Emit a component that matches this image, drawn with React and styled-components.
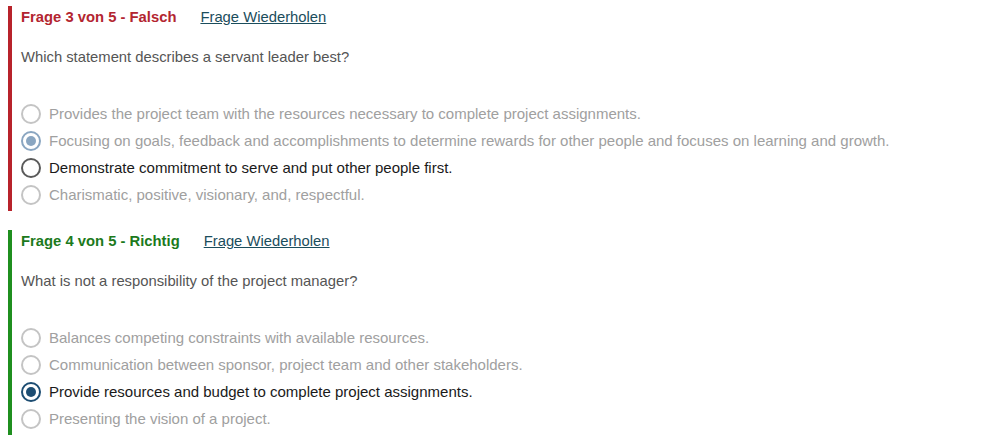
import styled, { createGlobalStyle } from 'styled-components';

const GlobalStyle = createGlobalStyle`
  body {
    margin: 6px 8px 8px;
    background: #fff;
    font-family: "Liberation Sans", Arial, sans-serif;
  }
`;

const Block = styled.section`
  border-left: 4px solid ${p => p.$correct ? '#1f8f1f' : '#b8232b'};
  padding: 0 0 3px 9px;
  margin: 0 0 19px;
`;

const Header = styled.div`
  display: flex;
  align-items: center;
  height: 22px;
  font-size: 14.8px;
`;

const Status = styled.span`
  font-weight: bold;
  color: ${p => p.$correct ? '#1c7a1c' : '#b32530'};
  margin-right: 24px;
`;

const Retry = styled.a`
  color: #1b4d5c;
  text-decoration: underline;
  cursor: pointer;
`;

const Question = styled.p`
  margin: 19px 0 0;
  line-height: 20px;
  font-size: 14.8px;
  color: #555;
`;

const Options = styled.div`
  margin-top: 33px;
  display: flex;
  flex-direction: column;
`;

const Option = styled.label`
  display: flex;
  align-items: center;
  height: 27px;
  font-size: 15px;
  color: ${p => p.$active ? '#1a1a1a' : '#a0a0a0'};
`;

const Radio = styled.span`
  box-sizing: border-box;
  width: 20px;
  height: 20px;
  border-radius: 50%;
  border: 2px solid ${p => p.$color};
  margin-right: 8px;
  display: flex;
  align-items: center;
  justify-content: center;
  flex: none;
  &::after {
    content: '';
    display: ${p => p.$checked ? 'block' : 'none'};
    width: 10px;
    height: 10px;
    border-radius: 50%;
    background: ${p => p.$color};
  }
`;

const quiz = [
  {
    title: 'Frage 3 von 5 - Falsch',
    correct: false,
    question: 'Which statement describes a servant leader best?',
    options: [
      { text: 'Provides the project team with the resources necessary to complete project assignments.' },
      { text: 'Focusing on goals, feedback and accomplishments to determine rewards for other people and focuses on learning and growth.', checked: true, color: '#8aa6c1' },
      { text: 'Demonstrate commitment to serve and put other people first.', active: true, color: '#5a5a5a' },
      { text: 'Charismatic, positive, visionary, and, respectful.' },
    ],
  },
  {
    title: 'Frage 4 von 5 - Richtig',
    correct: true,
    question: 'What is not a responsibility of the project manager?',
    options: [
      { text: 'Balances competing constraints with available resources.' },
      { text: 'Communication between sponsor, project team and other stakeholders.' },
      { text: 'Provide resources and budget to complete project assignments.', active: true, checked: true, color: '#1d4d72' },
      { text: 'Presenting the vision of a project.' },
    ],
  },
];

export default function App() {
  return (
    <>
      <GlobalStyle />
      {quiz.map(q => (
        <Block key={q.title} $correct={q.correct}>
          <Header>
            <Status $correct={q.correct}>{q.title}</Status>
            <Retry>Frage Wiederholen</Retry>
          </Header>
          <Question>{q.question}</Question>
          <Options>
            {q.options.map(o => (
              <Option key={o.text} $active={o.active}>
                <Radio $checked={o.checked} $color={o.color || '#c4c4c4'} />
                {o.text}
              </Option>
            ))}
          </Options>
        </Block>
      ))}
    </>
  );
}
